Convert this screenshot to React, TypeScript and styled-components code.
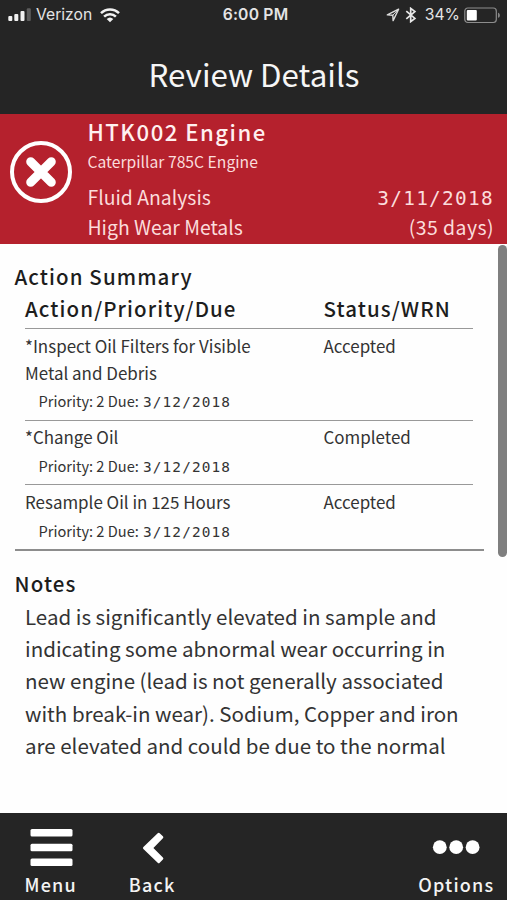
import React from "react";
import styled, { createGlobalStyle } from "styled-components";

const GlobalStyle = createGlobalStyle`
  * { box-sizing: border-box; }
  body { margin: 0; background: #fff; }
`;

const Screen = styled.div`
  width: 507px;
  height: 900px;
  overflow: hidden;
  display: flex;
  flex-direction: column;
  background: #fefefe;
  color: #333;
  font-family: "Noto Sans CJK SC", "Noto Sans", sans-serif;
  white-space: nowrap;
`;

const StatusBar = styled.div`
  height: 30px;
  display: grid;
  grid-template-columns: 1fr auto 1fr;
  align-items: center;
  padding: 0 6px 0 8px;
  color: #e4e4e4;
  font-family: Inter, sans-serif;
  font-size: 15.7px;
  line-height: 30px;
`;

const StatusGroup = styled.div<{ $end?: boolean }>`
  display: flex;
  align-items: center;
  justify-content: ${(p) => (p.$end ? "flex-end" : "flex-start")};
`;

const Carrier = styled.span`
  margin: 0 8px 0 4px;
`;

const Clock = styled.span`
  padding-left: 2px;
  font-weight: 600;
  font-size: 15.7px;
  letter-spacing: 0.2px;
`;

const Percent = styled.span`
  margin: 0 4px 0 8px;
`;

const TopBar = styled.header`
  flex: none;
  height: 114px;
  background: #252525;
`;

const Title = styled.h1`
  margin: 20px 0 0;
  padding-left: 1px;
  text-align: center;
  font-size: 31.3px;
  font-weight: 400;
  line-height: 47px;
  color: #f6f6f6;
`;

const Alert = styled.section`
  flex: none;
  height: 129.5px;
  display: grid;
  grid-template-columns: 87.5px 1fr;
  padding: 5px 13px 0 0;
  background: #b5212d;
  color: #fbdcdc;
`;

const AlertIcon = styled.div`
  padding: 20.5px 0 0 8.7px;
`;

const AssetName = styled.h2`
  margin: 0;
  font-size: 22.1px;
  font-weight: 500;
  line-height: 25px;
  letter-spacing: 1.5px;
  color: #fff0f0;
`;

const AssetModel = styled.div`
  margin: 6px 0 8px;
  font-size: 15.7px;
  line-height: 24px;
`;

const AlertRow = styled.div`
  display: flex;
  justify-content: space-between;
  align-items: baseline;
  height: 30px;
  font-size: 19.4px;
  line-height: 30px;
`;

const AlertDate = styled.span`
  font-family: "DejaVu Sans Mono", monospace;
  font-size: 19.4px;
  letter-spacing: 1.3px;
`;

const Days = styled.span`
  letter-spacing: 0.45px;
`;

const Content = styled.main`
  position: relative;
  flex: 1;
  overflow: hidden;
  padding: 19px 23px 0 14.5px;
`;

const ScrollThumb = styled.div`
  position: absolute;
  top: 1.5px;
  right: 0;
  width: 9px;
  height: 312px;
  border-radius: 4.5px;
  background: #7f7f7f;
`;

const SectionTitle = styled.h3`
  margin: 0;
  font-size: 20.5px;
  font-weight: 500;
  line-height: 27px;
  letter-spacing: 1.1px;
  color: #1d1d1d;
`;

const Summary = styled.section`
  height: 288.5px;
  border-bottom: 2px solid #8d8d8d;
`;

const ActionTable = styled.div`
  margin: 5.5px 11px 0 10.5px;
`;

const TableHead = styled.div`
  display: grid;
  grid-template-columns: 298.5px 1fr;
  height: 33px;
  font-size: 20.5px;
  font-weight: 500;
  line-height: 27px;
  letter-spacing: 1.1px;
  color: #1d1d1d;
`;

const ActionRow = styled.div`
  display: grid;
  grid-template-columns: 298.5px 1fr;
  border-top: 1px solid #999;
  padding: 2.7px 0 5.5px;
  font-size: 16.95px;
  line-height: 27px;
`;

const ActionName = styled.div`
  white-space: pre-line;
`;

const ActionMeta = styled.div`
  display: flex;
  align-items: baseline;
  margin-top: 1.5px;
  padding-left: 13.5px;
  font-size: 14.6px;
  line-height: 27px;
`;

const DueDate = styled.span`
  margin-left: 4.3px;
  font-family: "DejaVu Sans Mono", monospace;
  font-size: 14.4px;
  line-height: 20px;
  letter-spacing: 1.1px;
`;

const Notes = styled.section`
  padding-top: 19px;
`;

const NotesText = styled.p`
  margin: 2.7px 0 0 10.5px;
  font-size: 20.53px;
  line-height: 32.3px;
  white-space: pre-line;
`;

const Footer = styled.footer`
  flex: none;
  height: 87.5px;
  display: flex;
  justify-content: space-between;
  background: #252525;
  color: #f3f3f3;
`;

const FooterGroup = styled.div`
  display: flex;
`;

const NavButton = styled.button`
  width: 101.5px;
  padding: 10px 0 0;
  border: 0;
  background: none;
  color: inherit;
  display: flex;
  flex-direction: column;
  align-items: center;
  font: 500 18px/27px "Noto Sans CJK SC", sans-serif;
  letter-spacing: 1.2px;
`;

const NavIcon = styled.svg`
  display: block;
  flex: none;
`;

const SignalIcon = () => (
  <svg width="24" height="14" viewBox="0 0 24 14" fill="#f2f2f2">
    <rect x="0.3" y="8" width="4" height="5" rx="1" />
    <rect x="6.3" y="6" width="4" height="7" rx="1" />
    <rect x="12.5" y="3" width="4" height="10" rx="1" />
    <rect x="18.8" y="0.3" width="4" height="12.7" rx="1" fill="#5c5c5c" />
  </svg>
);

const WifiIcon = () => (
  <svg width="20" height="15" viewBox="0 0 20 15" fill="none" stroke="#f2f2f2" strokeWidth="2.5">
    <path d="M1 5.1a12.8 12.8 0 0 1 18 0" />
    <path d="M4.1 8.6a8.3 8.3 0 0 1 11.8 0" />
    <path d="M6.7 11a4.8 4.8 0 0 1 6.6 0L10 14.3Z" fill="#f2f2f2" stroke="none" />
  </svg>
);

const LocationIcon = () => (
  <svg width="14" height="14" viewBox="0 0 14 14" fill="none" stroke="#dcdcdc" strokeWidth="1.4" strokeLinejoin="round">
    <path d="M12.6 1.2 1.3 6.9l5.5.3.3 5.4Z" />
    <path d="M12.6 1.2 6.8 7.2" strokeWidth="1" />
  </svg>
);

const BluetoothIcon = () => (
  <svg width="12" height="16" viewBox="0 0 12 16" fill="none" stroke="#e8e8e8" strokeWidth="1.7" strokeLinejoin="miter">
    <path d="m1.3 4.2 8.6 7.2-4.2 3.2V1.4l4.2 3.2-8.6 7.2" />
  </svg>
);

const BatteryIcon = () => (
  <svg width="37" height="17" viewBox="0 0 37 17">
    <rect x="0.8" y="1" width="31.5" height="14.5" rx="3" fill="none" stroke="#8d8d8d" strokeWidth="1.2" />
    <rect x="2.8" y="3" width="10" height="10.5" rx="1" fill="#fff" />
    <path d="M34 5.7c2.5.5 2.5 4.6 0 5.1Z" fill="#858585" />
  </svg>
);

const actions = [
  { name: "*Inspect Oil Filters for Visible\nMetal and Debris", status: "Accepted" },
  { name: "*Change Oil", status: "Completed" },
  { name: "Resample Oil in 125 Hours", status: "Accepted" },
];

const notes = [
  "Lead is significantly elevated in sample and",
  "indicating some abnormal wear occurring in",
  "new engine (lead is not generally associated",
  "with break-in wear). Sodium, Copper and iron",
  "are elevated and could be due to the normal",
].join("\n");

export default function App() {
  return (
    <Screen>
      <GlobalStyle />
      <TopBar>
        <StatusBar>
          <StatusGroup>
            <SignalIcon />
            <Carrier>Verizon</Carrier>
            <WifiIcon />
          </StatusGroup>
          <Clock>6:00 PM</Clock>
          <StatusGroup $end>
            <LocationIcon />
            <span>&nbsp;</span>
            <BluetoothIcon />
            <Percent>34%</Percent>
            <BatteryIcon />
          </StatusGroup>
        </StatusBar>
        <Title>Review Details</Title>
      </TopBar>
      <Alert>
        <AlertIcon>
          <svg width="64" height="64" viewBox="0 0 64 64" fill="none" stroke="#fff">
            <circle cx="32" cy="32" r="29" strokeWidth="4" />
            <path d="m21.7 21.7 20.6 20.6m0-20.6-20.6 20.6" strokeWidth="9" strokeLinecap="round" />
          </svg>
        </AlertIcon>
        <div>
          <AssetName>HTK002 Engine</AssetName>
          <AssetModel>Caterpillar 785C Engine</AssetModel>
          <AlertRow>
            <span>Fluid Analysis</span>
            <AlertDate>3/11/2018</AlertDate>
          </AlertRow>
          <AlertRow>
            <span>High Wear Metals</span>
            <Days>(35 days)</Days>
          </AlertRow>
        </div>
      </Alert>
      <Content>
        <Summary>
          <SectionTitle>Action Summary</SectionTitle>
          <ActionTable>
            <TableHead>
              <span>Action/Priority/Due</span>
              <span>Status/WRN</span>
            </TableHead>
            {actions.map((a) => (
              <ActionRow key={a.name}>
                <div>
                  <ActionName>{a.name}</ActionName>
                  <ActionMeta>
                    Priority: 2 Due: <DueDate>3/12/2018</DueDate>
                  </ActionMeta>
                </div>
                <span>{a.status}</span>
              </ActionRow>
            ))}
          </ActionTable>
        </Summary>
        <Notes>
          <SectionTitle>Notes</SectionTitle>
          <NotesText>{notes}</NotesText>
        </Notes>
        <ScrollThumb />
      </Content>
      <Footer>
        <FooterGroup>
          <NavButton>
            <NavIcon width="50" height="48" viewBox="0 0 50 48" fill="#fff">
              <rect x="4.5" y="6" width="42" height="7.5" rx="1.5" />
              <rect x="4.5" y="20.7" width="42" height="7.5" rx="1.5" />
              <rect x="4.5" y="35.4" width="42" height="7.5" rx="1.5" />
            </NavIcon>
            Menu
          </NavButton>
          <NavButton>
            <NavIcon width="50" height="48" viewBox="0 0 50 48" fill="#fff">
              <path d="M30.7 10.2q1-1 2 0l3.2 3.1q1 1 0 2l-9.5 9.7 9.5 9.6q1 1 0 2l-3.2 3.1q-1 1-2 0L16.4 26q-1-1 0-2Z" />
            </NavIcon>
            Back
          </NavButton>
        </FooterGroup>
        <NavButton>
          <NavIcon width="50" height="48" viewBox="0 0 50 48" fill="#fff">
            <circle cx="8.8" cy="24.2" r="6.9" />
            <circle cx="25.2" cy="24.2" r="6.9" />
            <circle cx="41.6" cy="24.2" r="6.9" />
          </NavIcon>
          Options
        </NavButton>
      </Footer>
    </Screen>
  );
}
